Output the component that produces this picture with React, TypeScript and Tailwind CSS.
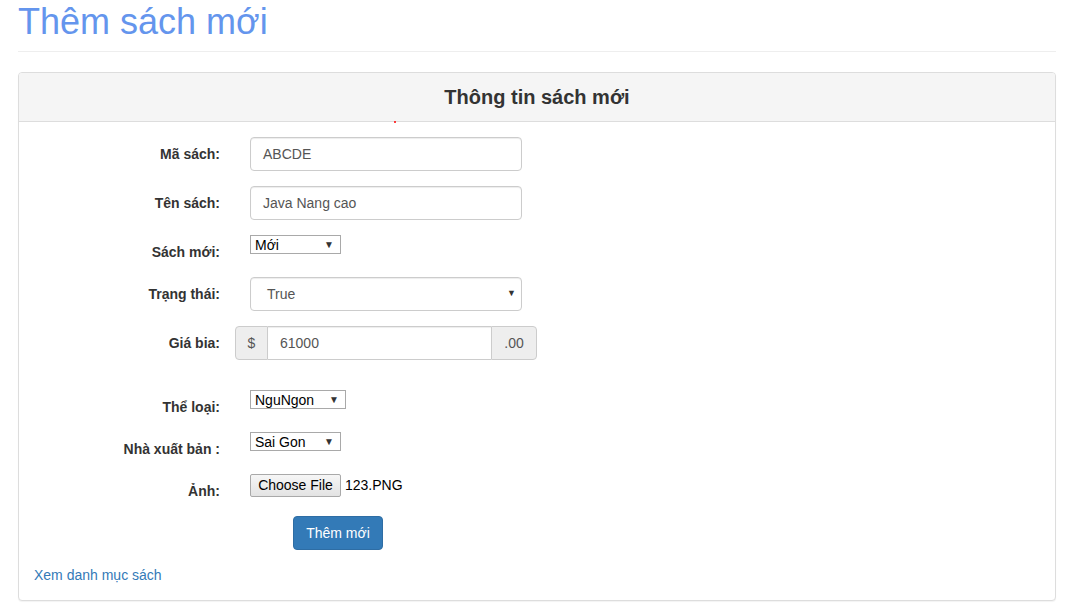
import React from "react";

const font = { fontFamily: '"Liberation Sans", Arial, Helvetica, sans-serif' };

function Label({ children }: { children: React.ReactNode }) {
  return (
    <div className="w-[186px] shrink-0 pt-[7px] text-right text-[14px] font-bold leading-5 text-[#333]">
      {children}
    </div>
  );
}

function TextInput({ value }: { value: string }) {
  return (
    <div className="flex h-[34px] w-[272px] items-center rounded-[4px] border border-[#ccc] bg-white px-3 text-[14px] text-[#555] shadow-[inset_0_1px_1px_rgba(0,0,0,0.075)]">
      {value}
    </div>
  );
}

function SmallSelect({ value, width }: { value: string; width: string }) {
  return (
    <div
      className={`flex h-[19px] items-center justify-between border border-[#a9a9a9] bg-white pl-[4px] pr-[6px] text-[14px] leading-none text-black ${width}`}
    >
      <span>{value}</span>
      <span className="text-[10px] text-[#333]">▼</span>
    </div>
  );
}

export default function App() {
  return (
    <div className="min-h-[616px] bg-white pl-[18px] pr-[28px] text-[14px] text-[#333]" style={font}>
      <div className="border-b border-[#eee] pb-[9px] pt-[2px]">
        <h1 className="text-[36px] font-normal leading-[40px] text-[#6495ed]">Thêm sách mới</h1>
      </div>

      <div className="relative mt-[20px] rounded-[4px] border border-[#ddd] bg-white shadow-[0_1px_1px_rgba(0,0,0,0.05)]">
        <div className="flex h-[49px] items-center justify-center rounded-t-[3px] border-b border-[#ddd] bg-[#f5f5f5]">
          <h3 className="text-[20px] font-bold leading-[24px] text-[#333]">Thông tin sách mới</h3>
        </div>
        <div className="absolute left-[375px] top-[48px] h-[2px] w-[2px] rounded-full bg-[#ff0000]" />

        <div className="px-[15px] pb-[15px] pt-[15px]">
          <div className="mb-[15px] flex items-start">
            <Label>Mã sách:</Label>
            <div className="ml-[30px]">
              <TextInput value="ABCDE" />
            </div>
          </div>

          <div className="mb-[15px] flex items-start">
            <Label>Tên sách:</Label>
            <div className="ml-[30px]">
              <TextInput value="Java Nang cao" />
            </div>
          </div>

          <div className="mb-[15px] flex items-start">
            <Label>Sách mới:</Label>
            <div className="ml-[30px]">
              <SmallSelect value="Mới" width="w-[91px]" />
            </div>
          </div>

          <div className="mb-[15px] flex items-start">
            <Label>Trạng thái:</Label>
            <div className="ml-[30px]">
              <div className="flex h-[34px] w-[272px] items-center justify-between rounded-[4px] border border-[#ccc] bg-white pl-[16px] pr-[5px] text-[14px] text-[#555] shadow-[inset_0_1px_1px_rgba(0,0,0,0.075)]">
                <span>True</span>
                <span className="text-[9px] text-[#333]">▼</span>
              </div>
            </div>
          </div>

          <div className="mb-[30px] flex items-start">
            <Label>Giá bia:</Label>
            <div className="ml-[15px] flex h-[34px] w-[302px]">
              <div className="flex w-[33px] items-center justify-center rounded-l-[4px] border border-[#ccc] bg-[#eee] text-[14px] text-[#555]">
                $
              </div>
              <div className="flex flex-1 items-center border-y border-[#ccc] bg-white px-3 text-[14px] text-[#555] shadow-[inset_0_1px_1px_rgba(0,0,0,0.075)]">
                61000
              </div>
              <div className="flex w-[46px] items-center justify-center rounded-r-[4px] border border-[#ccc] bg-[#eee] text-[14px] text-[#555]">
                .00
              </div>
            </div>
          </div>

          <div className="mb-[15px] flex items-start">
            <Label>Thể loại:</Label>
            <div className="ml-[30px]">
              <SmallSelect value="NguNgon" width="w-[96px]" />
            </div>
          </div>

          <div className="mb-[15px] flex items-start">
            <Label>Nhà xuất bản :</Label>
            <div className="ml-[30px]">
              <SmallSelect value="Sai Gon" width="w-[91px]" />
            </div>
          </div>

          <div className="mb-[15px] flex items-start">
            <Label>Ảnh:</Label>
            <div className="ml-[30px] flex items-center">
              <div className="flex h-[23px] w-[91px] items-center justify-center rounded-[2px] border border-[#a9a9a9] bg-gradient-to-b from-[#f6f6f6] to-[#e3e3e3] text-[14px] text-black">
                Choose File
              </div>
              <span className="ml-[4px] text-[14px] text-black">123.PNG</span>
            </div>
          </div>

          <div className="mb-[15px] pl-[259px]">
            <div className="flex h-[34px] w-[90px] items-center justify-center rounded-[4px] border border-[#2e6da4] bg-[#337ab7] text-[14px] text-white">
              Thêm mới
            </div>
          </div>

          <div className="leading-5">
            <a className="text-[14px] text-[#337ab7]">Xem danh mục sách</a>
          </div>
        </div>
      </div>
    </div>
  );
}
